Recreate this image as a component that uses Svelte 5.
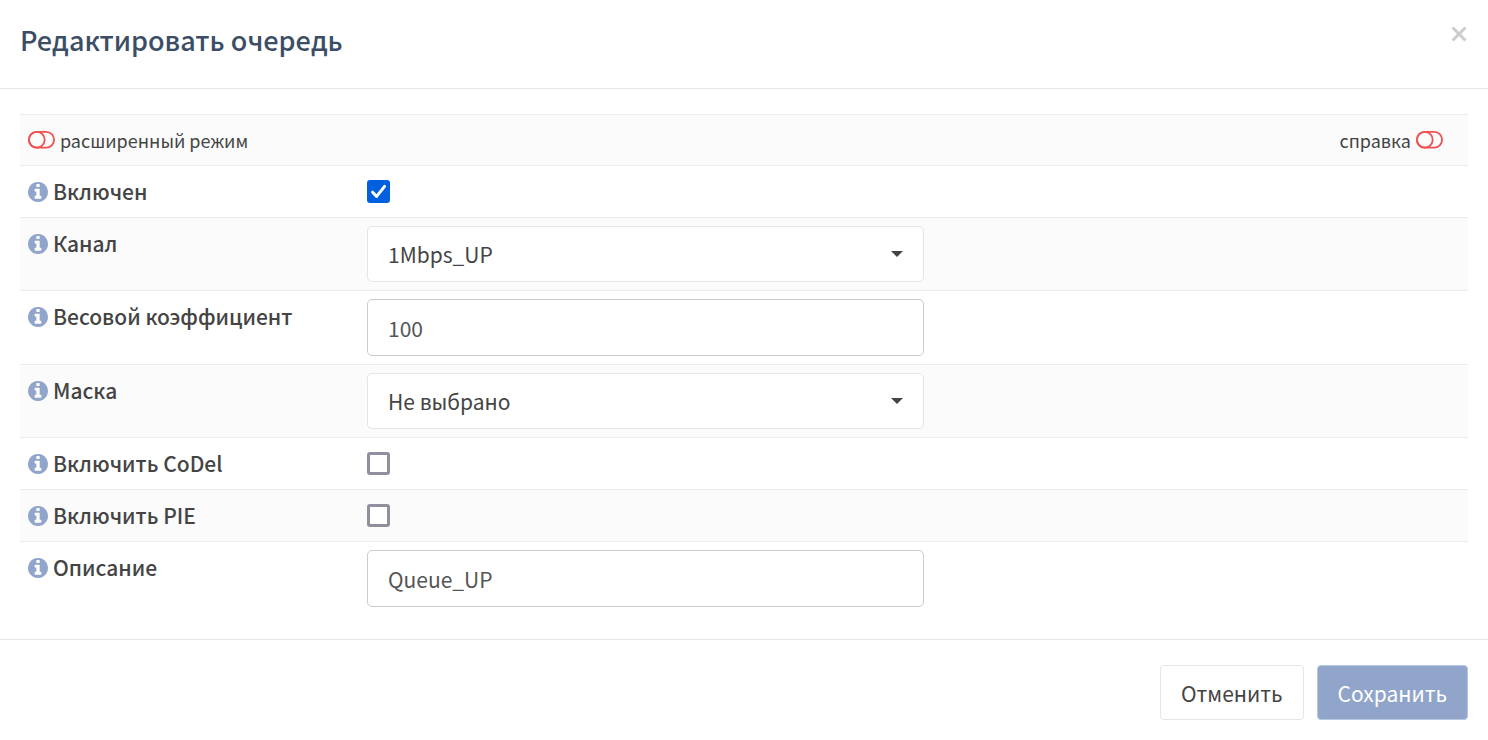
<script lang="ts">
  interface Field {
    id: string;
    label: string;
    type: 'checkbox' | 'select' | 'text';
    options?: string[];
  }

  const fields: Field[] = [
    { id: 'enabled', label: 'Включен', type: 'checkbox' },
    { id: 'pipe', label: 'Канал', type: 'select', options: ['1Mbps_UP'] },
    { id: 'weight', label: 'Весовой коэффициент', type: 'text' },
    { id: 'mask', label: 'Маска', type: 'select', options: ['Не выбрано'] },
    { id: 'codel', label: 'Включить CoDel', type: 'checkbox' },
    { id: 'pie', label: 'Включить PIE', type: 'checkbox' },
    { id: 'description', label: 'Описание', type: 'text' }
  ];

  let checks: Record<string, boolean> = $state({ enabled: true, codel: false, pie: false });
  let values: Record<string, string> = $state({
    pipe: '1Mbps_UP',
    weight: '100',
    mask: 'Не выбрано',
    description: 'Queue_UP'
  });

  let advanced = $state(false);
  let help = $state(false);
</script>

{#snippet toggle(on: boolean)}
  <svg class="toggle" class:on viewBox="0 0 27 18" aria-hidden="true">
    <rect x="0.9" y="0.9" width="25.2" height="15.8" rx="7.9" />
    <circle cx={on ? 18.2 : 8.8} cy="8.8" r="7.9" />
  </svg>
{/snippet}

<div class="dialog" role="dialog" aria-labelledby="dialog-title">
  <header class="dialog-header">
    <h4 id="dialog-title">Редактировать очередь</h4>
    <button class="close" type="button" aria-label="Закрыть">
      <svg viewBox="0 0 16 16" aria-hidden="true"><path d="M1.5 1.5l13 13M14.5 1.5l-13 13" /></svg>
    </button>
  </header>

  <form id="queue-form" class="dialog-body" onsubmit={(e) => e.preventDefault()}>
    <div class="modes">
      <button type="button" class="mode" aria-pressed={advanced} onclick={() => (advanced = !advanced)}>
        {@render toggle(advanced)}
        <span>расширенный режим</span>
      </button>
      <button type="button" class="mode" aria-pressed={help} onclick={() => (help = !help)}>
        <span>справка</span>
        {@render toggle(help)}
      </button>
    </div>

    {#each fields as field (field.id)}
      <div class="row">
        <div class="name">
          <svg class="info" viewBox="128 128 1536 1536" aria-hidden="true">
            <path d="M1152 1376v-160q0-14-9-23t-23-9h-96v-512q0-14-9-23t-23-9h-320q-14 0-23 9t-9 23v160q0 14 9 23t23 9h96v320h-96q-14 0-23 9t-9 23v160q0 14 9 23t23 9h448q14 0 23-9t9-23zm-128-896v-160q0-14-9-23t-23-9h-192q-14 0-23 9t-9 23v160q0 14 9 23t23 9h192q14 0 23-9t9-23zm640 416q0 209-103 385.5t-279.5 279.5-385.5 103-385.5-103-279.5-279.5-103-385.5 103-385.5 279.5-279.5 385.5-103 385.5 103 279.5 279.5 103 385.5z" />
          </svg>
          <label for={field.id}>{field.label}</label>
        </div>
        <div class="control">
          {#if field.type === 'checkbox'}
            <input id={field.id} class="check" type="checkbox" bind:checked={checks[field.id]} />
          {:else if field.type === 'select'}
            <div class="select-wrap">
              <select id={field.id} bind:value={values[field.id]}>
                {#each field.options ?? [] as option}
                  <option value={option}>{option}</option>
                {/each}
              </select>
              <svg class="caret" viewBox="0 0 12 6" aria-hidden="true"><path d="M0 0h12l-6 6z" /></svg>
            </div>
          {:else}
            <input id={field.id} class="text" type="text" bind:value={values[field.id]} />
          {/if}
        </div>
      </div>
    {/each}
  </form>

  <footer class="dialog-footer">
    <button class="btn" type="button">Отменить</button>
    <button class="btn btn-primary" type="submit" form="queue-form">Сохранить</button>
  </footer>
</div>

<style>
  :global(body) {
    background: #fff;
  }

  .dialog,
  .dialog button,
  .dialog input,
  .dialog select {
    box-sizing: border-box;
    font-family: 'Source Sans Pro', 'Noto Sans CJK SC', 'Noto Sans', sans-serif;
    font-size: 21px;
    color: #444;
  }

  .dialog-header {
    display: flex;
    align-items: flex-start;
    justify-content: space-between;
    padding: 20px 21px 28px 20px;
    border-bottom: 1px solid #e5e5e5;
  }
  h4 {
    margin: 0;
    font-size: 27px;
    line-height: 40px;
    font-weight: 500;
    color: #3c4e66;
  }

  .close {
    display: flex;
    padding: 6px 0;
    border: 0;
    background: none;
    cursor: pointer;
  }
  .close svg {
    width: 16px;
    height: 16px;
    stroke: #ccc;
    stroke-width: 3;
    fill: none;
  }

  .dialog-body {
    padding: 25px 20px 24px;
  }

  .modes {
    display: flex;
    align-items: center;
    justify-content: space-between;
    padding: 8px 25px 8px 8px;
    border-top: 1px solid #ececec;
    background: #fbfbfb;
  }
  .dialog .mode {
    display: flex;
    align-items: center;
    gap: 5px;
    padding: 0;
    border: 0;
    background: none;
    font-size: 18px;
    line-height: 34px;
    cursor: pointer;
  }
  .toggle {
    width: 27px;
    height: 18px;
    fill: none;
    stroke: #f05050;
    stroke-width: 1.8;
  }
  .toggle.on {
    stroke: #4caf50;
  }

  .row {
    display: grid;
    grid-template-columns: 339fr 573fr 536fr;
    border-top: 1px solid #ececec;
  }
  .row:nth-child(odd) {
    background: #fbfbfb;
  }
  .name {
    display: flex;
    align-items: center;
    align-self: start;
    gap: 5px;
    padding: 8px 0 8px 8px;
    line-height: 35px;
    font-weight: 500;
  }
  .info {
    width: 20px;
    height: 20px;
    fill: #90a5c9;
  }
  .control {
    display: flex;
    align-items: center;
    padding: 8px;
  }

  .check {
    appearance: none;
    width: 23px;
    height: 23px;
    margin: 0;
    border: 3px solid #8f8f9d;
    border-radius: 3px;
    background: #fff;
  }
  .check:checked {
    border-color: #0060df;
    background: #0060df url("data:image/svg+xml,%3Csvg xmlns='http://www.w3.org/2000/svg' viewBox='0 0 17 17' fill='none' stroke='white' stroke-width='3' stroke-linecap='round' stroke-linejoin='round'%3E%3Cpath d='M2.6 9.2l4 4.2L14.6 3.4'/%3E%3C/svg%3E") center / 17px no-repeat;
  }

  .dialog .text {
    width: 100%;
    height: 57px;
    padding: 0 20px;
    border: 1px solid #ccc;
    border-radius: 5px;
    background: #fff;
    color: #555;
  }

  .select-wrap {
    display: grid;
    align-items: center;
    width: 100%;
  }
  .select-wrap > :global(*) {
    grid-area: 1 / 1;
  }
  select {
    appearance: none;
    width: 100%;
    height: 56px;
    padding: 0 20px;
    border: 1px solid #e5e5e5;
    border-radius: 5px;
    background: #fff;
  }
  .caret {
    justify-self: end;
    width: 12px;
    height: 6px;
    margin-right: 21px;
    fill: #444;
    pointer-events: none;
  }

  .dialog-footer {
    display: flex;
    justify-content: flex-end;
    gap: 13px;
    padding: 25px 20px 20px;
    border-top: 1px solid #e5e5e5;
  }
  .btn {
    height: 55px;
    padding: 0 20px;
    border: 1px solid #e5e5e5;
    border-radius: 4px;
    background: #fff;
    cursor: pointer;
  }
  .dialog .btn-primary {
    border-color: #b4c7e4;
    background: #90a5c9;
    color: #fff;
  }
</style>
